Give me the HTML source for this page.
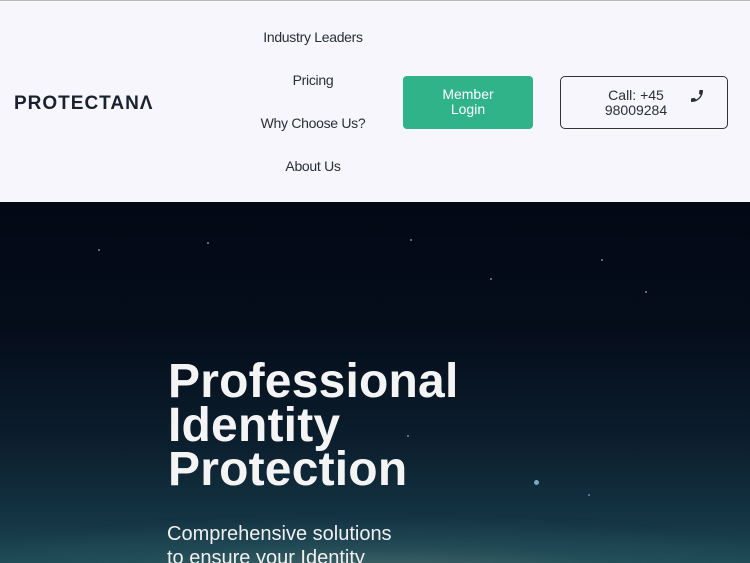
<!DOCTYPE html>
<html><head><style>
*{margin:0;padding:0;box-sizing:border-box}
html,body{width:750px;height:563px;overflow:hidden}
body{font-family:"Liberation Sans",sans-serif;background:#f7f7fd;position:relative}
.hdr{position:absolute;left:0;top:0;width:750px;height:202px;background:#f6f6fc;border-top:1px solid #bbb}
.logo{position:absolute;left:14px;top:92px;font-size:19px;font-weight:bold;color:#1a2230;letter-spacing:1px}
.nav a{position:absolute;width:200px;left:213px;text-align:center;font-size:14px;color:#2a2f38;text-decoration:none;letter-spacing:-0.3px}
.btn1{position:absolute;left:403px;top:75px;width:130px;height:53px;background:#31b38a;border-radius:4px;color:#fff;font-size:14px;text-align:center;padding-top:11px;line-height:15px}
.btn2{position:absolute;left:560px;top:75px;width:168px;height:53px;border:1px solid #333;border-radius:5px;color:#2a2f38;font-size:14px;line-height:15px}
.hero{position:absolute;left:0;top:202px;width:750px;height:361px;background:linear-gradient(180deg,#030815 0%,#050d1b 35%,#0b1d2c 65%,#143444 88%,#1f4a55 100%);overflow:hidden}
.glow{position:absolute;left:-200px;top:320px;width:1150px;height:220px;border-radius:50%;background:radial-gradient(ellipse 50% 40% at 50% 30%,rgba(190,190,160,.35),rgba(60,110,120,.15) 50%,transparent 100%);filter:blur(6px)}
h1{position:absolute;left:168px;top:158px;font-size:48px;line-height:44px;color:#f4f4f4;font-weight:bold;letter-spacing:0.2px}
p{position:absolute;left:167px;top:320px;font-size:20px;line-height:24px;color:#f0f0f0}
.s{position:absolute;width:2px;height:2px;background:#6b8ea0;border-radius:50%}
</style></head><body>
<div class="hdr">
<div class="logo">PROTECTANΛ</div>
<div class="nav"><a style="top:28px">Industry Leaders</a><a style="top:71px">Pricing</a><a style="top:114px">Why Choose Us?</a><a style="top:157px">About Us</a></div>
<div class="btn1">Member<br>Login</div>
<div class="btn2"><div style="position:absolute;left:0;width:150px;top:11px;text-align:center">Call: +45<br>98009284</div>
<svg style="position:absolute;left:128px;top:11px" width="16" height="16" viewBox="0 0 24 24"><path fill="#2a2f38" d="M20 15.5c-1.2 0-2.4-.2-3.6-.6-.3-.1-.7 0-1 .2l-2.2 2.2c-2.8-1.4-5.1-3.800-6.6-6.6l2.2-2.2c.3-.3.4-.7.2-1C8.7 6.4 8.5 5.2 8.5 4c0-.6-.4-1-1-1H4c-.6 0-1 .4-1 1 0 9.4 7.6 17 17 17 .6 0 1-.4 1-1v-3.5c0-.6-.4-1-1-1z" transform="scale(-1,1) translate(-24,0)"/></svg></div>
</div>
<div class="hero">
<div class="glow"></div>
<div class="s" style="left:207px;top:40px"></div><div class="s" style="left:410px;top:37px"></div><div class="s" style="left:601px;top:57px"></div><div class="s" style="left:98px;top:47px"></div><div class="s" style="left:645px;top:89px"></div><div class="s" style="left:490px;top:76px"></div><div class="s" style="left:407px;top:233px"></div><div class="s" style="left:534px;top:278px;width:5px;height:5px;background:#7ab"></div><div class="s" style="left:588px;top:292px"></div>
<h1>Professional<br>Identity<br>Protection</h1>
<p>Comprehensive solutions<br>to ensure your Identity</p>
</div>
</body></html>
